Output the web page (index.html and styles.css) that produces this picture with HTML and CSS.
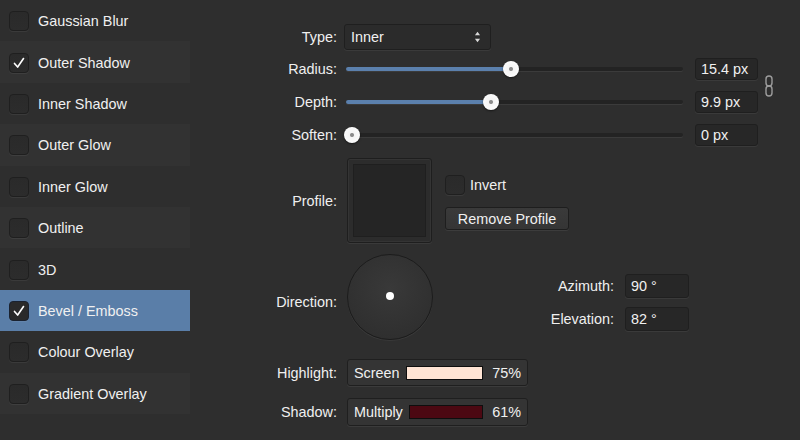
FILE: index.html
```html
<!DOCTYPE html>
<html lang="en">
<head>
    <meta charset="UTF-8">
    <title>Layer Effects</title>
    <link rel="stylesheet" href="styles.css">
</head>
<body>
    <div class="window">
        <ul class="effects">
            <li class="effect"><span class="check"></span>Gaussian Blur</li>
            <li class="effect"><span class="check on"><svg viewBox="0 0 20 20"><path d="M5 10.5 L8.5 14.5 L15 5"/></svg></span>Outer Shadow</li>
            <li class="effect"><span class="check"></span>Inner Shadow</li>
            <li class="effect"><span class="check"></span>Outer Glow</li>
            <li class="effect"><span class="check"></span>Inner Glow</li>
            <li class="effect"><span class="check"></span>Outline</li>
            <li class="effect"><span class="check"></span>3D</li>
            <li class="effect selected"><span class="check on"><svg viewBox="0 0 20 20"><path d="M5 10.5 L8.5 14.5 L15 5"/></svg></span>Bevel / Emboss</li>
            <li class="effect"><span class="check"></span>Colour Overlay</li>
            <li class="effect"><span class="check"></span>Gradient Overlay</li>
        </ul>

        <div class="panel">
            <div class="row row-type">
                <label class="lbl">Type:</label>
                <div class="select">
                    <span>Inner</span>
                    <svg class="arrows" viewBox="0 0 8 14"><path d="M4 1 L7 5 L1 5 Z"/><path d="M4 13 L7 9 L1 9 Z"/></svg>
                </div>
            </div>

            <div class="linked">
                <div class="linked-rows">
                    <div class="row row-slider first">
                        <label class="lbl">Radius:</label>
                        <div class="slider">
                            <div class="fill" style="width: 165px"></div>
                            <div class="thumb" style="left: 157px"></div>
                        </div>
                        <div class="value">15.4 px</div>
                    </div>
                    <div class="row row-slider">
                        <label class="lbl">Depth:</label>
                        <div class="slider">
                            <div class="fill" style="width: 145px"></div>
                            <div class="thumb" style="left: 137px"></div>
                        </div>
                        <div class="value">9.9 px</div>
                    </div>
                </div>
                <svg class="chain" viewBox="0 0 10 22"><rect x="2" y="1" width="6" height="10" rx="3"/><rect x="2" y="11" width="6" height="10" rx="3"/></svg>
            </div>

            <div class="row row-slider">
                <label class="lbl">Soften:</label>
                <div class="slider">
                    <div class="fill" style="width: 0px"></div>
                    <div class="thumb" style="left: -2px"></div>
                </div>
                <div class="value">0 px</div>
            </div>

            <div class="row row-profile">
                <label class="lbl">Profile:</label>
                <div class="profile"><div class="profile-inner"></div></div>
                <div class="profile-side">
                    <div class="invert"><span class="check"></span>Invert</div>
                    <button class="btn">Remove Profile</button>
                </div>
            </div>

            <div class="row row-direction">
                <label class="lbl">Direction:</label>
                <div class="dial"><span class="dot"></span></div>
                <div class="angles">
                    <div class="angle"><label>Azimuth:</label><div class="value small">90 °</div></div>
                    <div class="angle"><label>Elevation:</label><div class="value small">82 °</div></div>
                </div>
            </div>

            <div class="row row-blend">
                <label class="lbl">Highlight:</label>
                <div class="blend">
                    <span>Screen</span>
                    <span class="swatch highlight"></span>
                    <span class="pct">75%</span>
                </div>
            </div>

            <div class="row row-blend second">
                <label class="lbl">Shadow:</label>
                <div class="blend">
                    <span>Multiply</span>
                    <span class="swatch shadow"></span>
                    <span class="pct">61%</span>
                </div>
            </div>
        </div>
    </div>
</body>
</html>
```

FILE: styles.css
```css
html, body {
    margin: 0;
    padding: 0;
    height: 100%;
    background: #2e2e2e;
}
body {
    font-family: 'Liberation Sans', Arial, sans-serif;
    font-size: 14.4px;
    color: #f0f0f0;
    overflow: hidden;
}
.window {
    display: flex;
    height: 440px;
}
.effects {
    list-style: none;
    margin: 0;
    padding: 0;
    width: 190px;
    flex: none;
}
.effect {
    display: flex;
    align-items: center;
    height: 41.4px;
    padding-left: 9px;
    padding-top: 1px;
    box-sizing: border-box;
}
.effect:nth-child(even) {
    background: #323232;
}
.effect.selected {
    background: #5a7ea8;
}
.check {
    width: 18px;
    height: 18px;
    border: 1px solid #1f1f1f;
    border-radius: 4px;
    background: linear-gradient(#2a2a2a, #2c2c2c);
    box-shadow: 0 1px 0 rgba(255, 255, 255, 0.06);
    margin-right: 9px;
    flex: none;
    display: flex;
    align-items: center;
    justify-content: center;
}
.check svg {
    width: 18px;
    height: 18px;
    fill: none;
    stroke: #fff;
    stroke-width: 1.8;
    stroke-linecap: round;
    stroke-linejoin: round;
}
.selected .check {
    background: #2a2a2a;
    border-color: #1a2230;
}

.panel {
    flex: 1;
    display: flex;
    flex-direction: column;
}
.row {
    display: flex;
    align-items: center;
}
.lbl {
    width: 147px;
    flex: none;
    text-align: right;
}
.row-type {
    margin-top: 24px;
    height: 26px;
}
.select {
    margin-left: 7px;
    width: 147px;
    height: 26px;
    box-sizing: border-box;
    border: 1px solid #1f1f1f;
    border-radius: 3px;
    background: #2b2b2b;
    box-shadow: 0 1px 0 #3a3a3a;
    display: flex;
    align-items: center;
    justify-content: space-between;
    padding: 0 9px 0 6px;
}
.arrows {
    width: 7px;
    height: 12px;
    fill: #d8d8d8;
}

.linked {
    display: flex;
    align-items: center;
}
.row-slider {
    height: 22px;
    margin-top: 11px;
}
.row-slider.first {
    margin-top: 8px;
}
.slider {
    position: relative;
    margin-left: 9px;
    width: 337px;
    height: 4px;
    border-radius: 2px;
    background: #232323;
    box-shadow: 0 1px 0 #3b3b3b;
}
.fill {
    height: 4px;
    border-radius: 2px;
    background: #5b80ad;
}
.thumb {
    position: absolute;
    top: -6px;
    width: 16px;
    height: 16px;
    border-radius: 50%;
    background: radial-gradient(circle, #8a8a8a 0, #8a8a8a 1.5px, #f4f4f4 2.5px, #ffffff 100%);
    box-shadow: 0 1px 2px rgba(0, 0, 0, 0.5);
}
.value {
    margin-left: 12px;
    width: 63px;
    height: 22px;
    box-sizing: border-box;
    border: 1px solid #1f1f1f;
    border-radius: 3px;
    background: #272727;
    box-shadow: 0 1px 0 #3a3a3a;
    padding-left: 5px;
    line-height: 20px;
}
.chain {
    width: 10px;
    height: 22px;
    margin-left: 6px;
    margin-top: 8px;
    fill: none;
    stroke: #9c9c9c;
    stroke-width: 1.4;
}

.row-profile {
    margin-top: 12px;
    height: 85px;
}
.profile {
    margin-left: 10px;
    width: 85px;
    height: 85px;
    box-sizing: border-box;
    border: 1px solid #1e1e1e;
    border-radius: 3px;
    background: #2c2c2c;
    box-shadow: 0 1px 0 #3a3a3a, inset 0 0 0 1px #343434;
    padding: 5px;
}
.profile-inner {
    height: 100%;
    background: #252525;
    border: 1px solid #1f1f1f;
    box-sizing: border-box;
}
.profile-side {
    margin-left: 13px;
    margin-top: 4px;
    display: flex;
    flex-direction: column;
    gap: 12px;
}
.invert {
    display: flex;
    align-items: center;
}
.invert .check {
    margin-right: 5px;
}
.btn {
    font: inherit;
    color: #f0f0f0;
    width: 124px;
    height: 23px;
    border: 1px solid #1e1e1e;
    border-radius: 3px;
    background: linear-gradient(#3a3a3a, #353535);
    box-shadow: 0 1px 0 #3c3c3c;
    padding: 0;
}

.row-direction {
    margin-top: 10px;
    height: 87px;
}
.row-direction .lbl {
    padding-top: 10px;
}
.dial {
    margin-left: 10px;
    width: 86px;
    height: 86px;
    box-sizing: border-box;
    border-radius: 50%;
    border: 1px solid #1c1c1c;
    background: radial-gradient(circle at 50% 40%, #393939, #2f2f2f 75%);
    box-shadow: 0 1px 0 #3a3a3a;
    display: flex;
    align-items: center;
    justify-content: center;
}
.dot {
    width: 8px;
    height: 8px;
    border-radius: 50%;
    background: #fff;
    margin-bottom: 2px;
}
.angles {
    margin-left: 91px;
    margin-top: 12px;
    display: flex;
    flex-direction: column;
    gap: 9px;
}
.angle {
    display: flex;
    align-items: center;
}
.angle label {
    width: 90px;
    text-align: right;
}
.value.small {
    margin-left: 11px;
    width: 64px;
    height: 24px;
    line-height: 22px;
}

.row-blend {
    margin-top: 19px;
    height: 27px;
}
.row-blend.second {
    margin-top: 12px;
    height: 28px;
}
.blend {
    margin-left: 10px;
    width: 181px;
    height: 100%;
    box-sizing: border-box;
    border: 1px solid #1f1f1f;
    border-radius: 3px;
    background: #343434;
    box-shadow: 0 1px 0 #3b3b3b;
    display: flex;
    align-items: center;
    padding: 0 6px;
}
.swatch {
    flex: 1;
    margin-left: 6px;
    height: 14px;
    box-sizing: border-box;
    border: 1px solid #0e0e0e;
}
.swatch.highlight {
    background: #ffe4d4;
}
.swatch.shadow {
    background: #4c0812;
}
.pct {
    width: 38px;
    text-align: right;
}
```
